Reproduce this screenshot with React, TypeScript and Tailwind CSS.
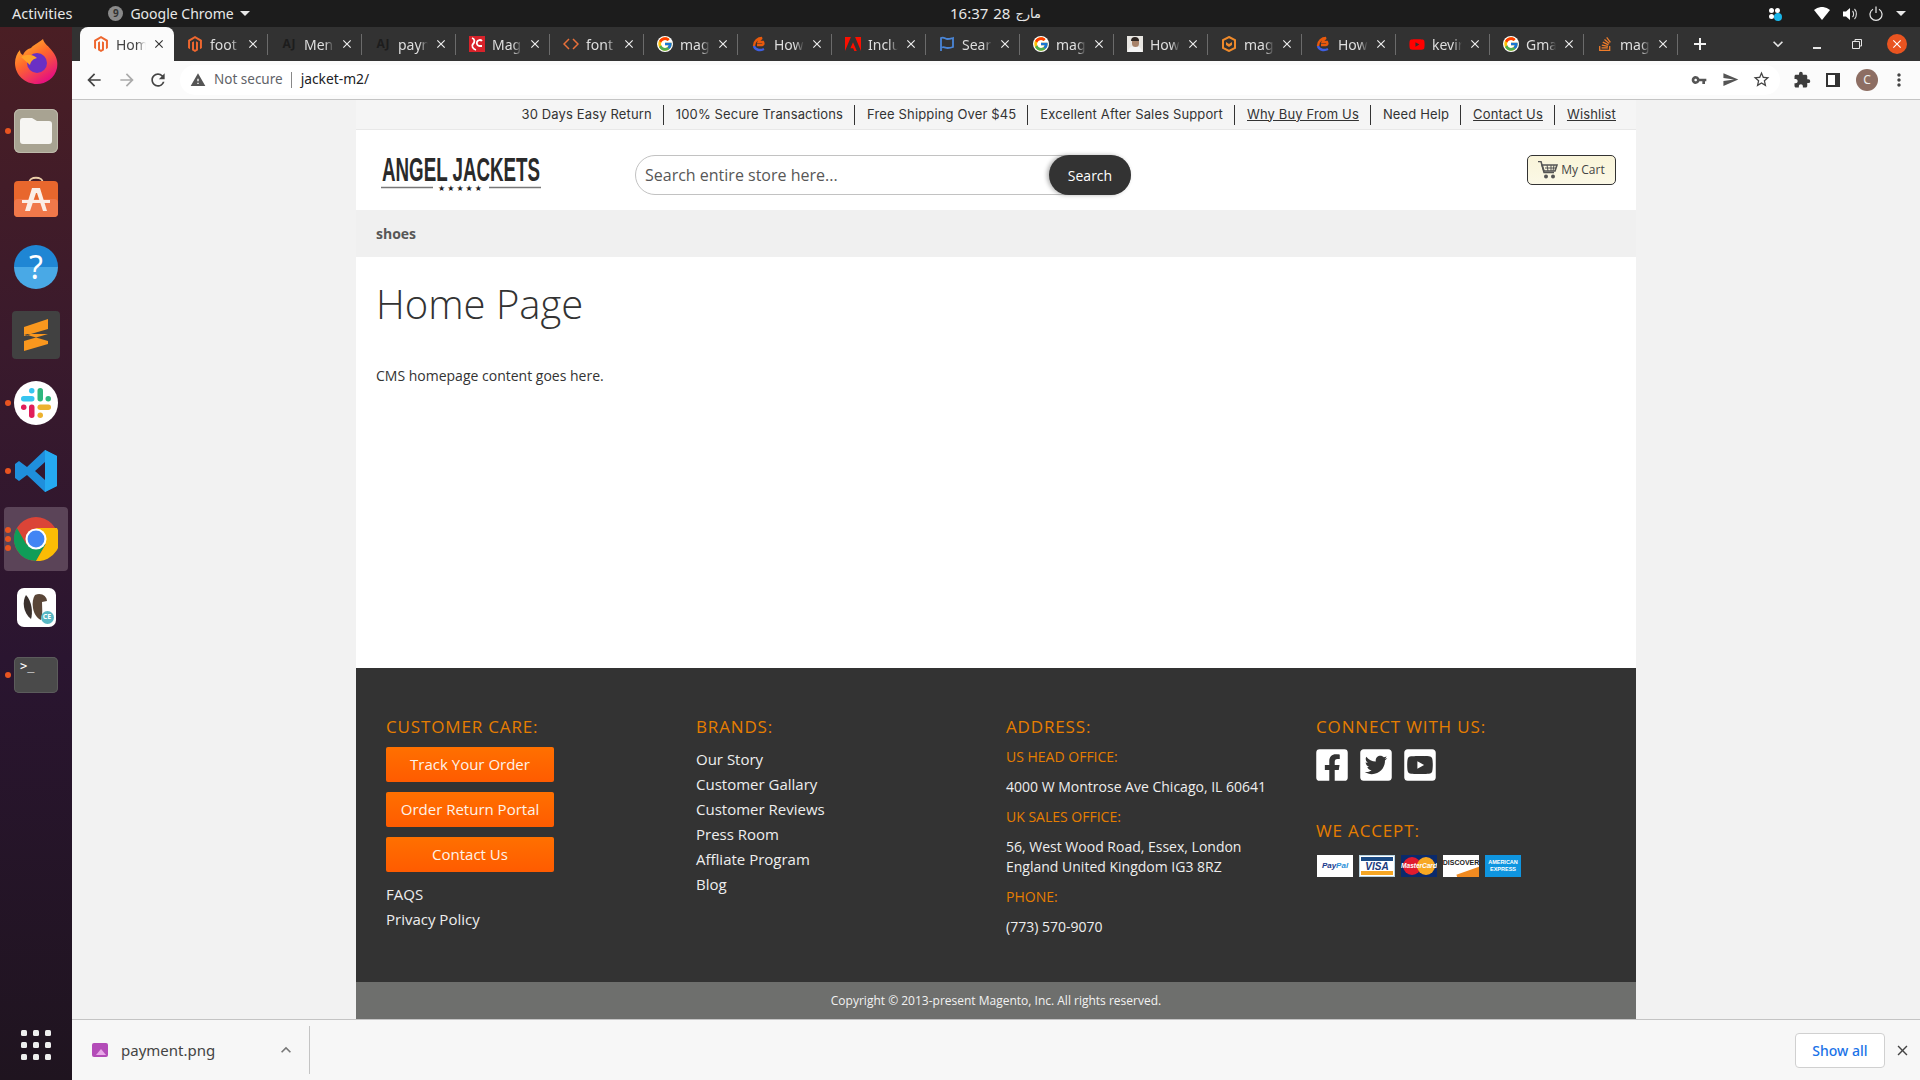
import type { ReactNode } from 'react'
import { FcGoogle } from 'react-icons/fc'
import { FaFacebookSquare, FaMagento, FaStackOverflow, FaTwitterSquare, FaYoutube, FaYoutubeSquare } from 'react-icons/fa'
import { SiAdobe } from 'react-icons/si'
import {
  MdArrowBack,
  MdArrowForward,
  MdClose,
  MdExpandLess,
  MdExpandMore,
  MdExtension,
  MdMoreVert,
  MdRefresh,
  MdSend,
  MdStarBorder,
  MdVpnKey,
  MdWarning,
} from 'react-icons/md'

const openSans = "font-['Open_Sans',sans-serif]"

function ChromeLogo({ size = 44 }: { size?: number }) {
  return (
    <svg width={size} height={size} viewBox="0 0 48 48">
      <circle cx="24" cy="24" r="24" fill="#db4437" />
      <path d="M3.2 12 A24 24 0 0 0 24 48 L34.400 30 L24 24 L13.600 30 Z" fill="#0f9d58" />
      <path d="M24 12 H46.800 A24 24 0 0 1 24 48 L34.400 30 Z" fill="#fbbc05" />
      <circle cx="24" cy="24" r="11.500" fill="#fff" />
      <circle cx="24" cy="24" r="9.200" fill="#4285f4" />
    </svg>
  )
}

function EdgeE() {
  return (
    <svg width="16" height="16" viewBox="0 0 16 16">
      <path d="M3 10 C3 5 7 2 11 2 C9 3 8 4 7.500 6 L12 6 C13 8 12 9 11 9 L6 9" fill="none" stroke="#e8590c" strokeWidth="2.400" />
      <path d="M3 10 C4 14 9 15 13 13" fill="none" stroke="#3f5fe0" strokeWidth="2.400" />
    </svg>
  )
}

const tabs: { label: string; icon: ReactNode }[] = [
  { label: 'Hom', icon: <FaMagento size={16} color="#ee672f" /> },
  { label: 'foot', icon: <FaMagento size={16} color="#ee672f" /> },
  { label: 'Men', icon: <span className="text-[12px] font-bold text-[#1d1d1d]">AJ</span> },
  { label: 'payn', icon: <span className="text-[12px] font-bold text-[#1d1d1d]">AJ</span> },
  { label: 'Mag', icon: (
    <svg width="16" height="16" viewBox="0 0 16 16">
      <rect width="16" height="16" fill="#d8222a" />
      <path d="M3 2c3 1 3 4 1 6s0 5 3 6M13 5a3 3 0 1 0-2 5h2" fill="none" stroke="#fff" strokeWidth="1.800" />
    </svg>
  ) },
  { label: 'font', icon: (
    <svg width="16" height="12" viewBox="0 0 16 12"><path d="M6 1L1 6l5 5M10 1l5 5-5 5" fill="none" stroke="#e8703a" strokeWidth="1.500" /></svg>
  ) },
  { label: 'mag', icon: <FcGoogle size={16} className="rounded-full bg-white" /> },
  { label: 'How', icon: <EdgeE /> },
  { label: 'Inclu', icon: <SiAdobe size={16} color="#fa0f00" /> },
  { label: 'Sear', icon: (
    <svg width="16" height="16" viewBox="0 0 16 16"><path d="M2 15V2c3-1.500 4 1 6.500 1S12 2.500 14 2v9c-2 .800-3.500 1-5.500 1S5 10.500 3 11.500" fill="none" stroke="#4a86d8" strokeWidth="1.800" /></svg>
  ) },
  { label: 'mag', icon: <FcGoogle size={16} className="rounded-full bg-white" /> },
  { label: 'How', icon: (
    <span className="relative flex h-4 w-4 items-end justify-center overflow-hidden bg-[#e8e6e2]">
      <span className="absolute bottom-0 h-[6px] w-[14px] rounded-t-full bg-[#f4f4f4]" />
      <span className="absolute top-[2px] h-[9px] w-[7px] rounded-full bg-[#a8836a]" />
      <span className="absolute top-[1px] h-[4px] w-[8px] rounded-t-full bg-[#2e2622]" />
    </span>
  ) },
  { label: 'mag', icon: (
    <svg width="16" height="16" viewBox="0 0 16 16"><path d="M8 1l6 3v8l-6 3-6-3V4z" fill="none" stroke="#ef8a2b" strokeWidth="2" /><path d="M5 6l3 2 3-2v3l-3 2-3-2z" fill="#ef8a2b" /></svg>
  ) },
  { label: 'How', icon: <EdgeE /> },
  { label: 'kevir', icon: <FaYoutube size={17} color="#ff0000" /> },
  { label: 'Gma', icon: <FcGoogle size={16} className="rounded-full bg-white" /> },
  { label: 'mag', icon: <FaStackOverflow size={16} color="#ef7d2b" /> },
]

function BrowserTab({ label, icon, active, divider }: { label: string; icon: ReactNode; active?: boolean; divider?: boolean }) {
  return (
    <div className={`flex h-full w-[94px] items-center pl-[13px] font-['Noto_Sans',sans-serif] ${active ? 'rounded-t-[8px] bg-[#fbfbfb] text-[#454545]' : 'text-[#dedede]'}`}>
      <span className="flex w-4 shrink-0 justify-center">{icon}</span>
      <span className="ml-[7px] w-[30px] shrink-0 overflow-hidden whitespace-nowrap text-[14px] [mask-image:linear-gradient(to_right,black_70%,transparent)]">
        {label}
      </span>
      <MdClose size={14} className={`ml-[6px] shrink-0 ${active ? 'text-[#333]' : 'text-[#eee]'}`} />
      {divider && <span className="ml-auto h-[21px] w-px bg-[#6b6b6b]" />}
    </div>
  )
}

function TopBar() {
  return (
    <div className="flex h-[27px] shrink-0 items-center bg-[#1c1c1c] text-[14.500px] text-[#e8e8e8] font-['Noto_Sans',sans-serif]">
      <div className="flex w-[950px] shrink-0 items-center pl-3">
        <span>Activities</span>
        <span className="ml-[36px] flex h-[15px] w-[15px] items-center justify-center rounded-full bg-[#8a8a8a] text-[10px] font-bold text-[#333]">9</span>
        <span className="ml-[7px] text-[14px]">Google Chrome</span>
        <span className="ml-[6px] h-0 w-0 border-x-[5px] border-t-[5px] border-x-transparent border-t-[#e8e8e8]" />
      </div>
      <div className="flex w-[91px] shrink-0 items-center justify-between whitespace-nowrap text-[15px]">
        <span>16:37</span>
        <span>28</span>
        <span className="font-['DejaVu_Sans',sans-serif] text-[13px]" dir="rtl">مارج</span>
      </div>
      <div className="ml-auto flex items-center pr-[14px]">
        <span className="relative h-3 w-3">
          <span className="absolute left-0 top-0 grid grid-cols-2 gap-px">
            <i className="h-[5px] w-[5px] rounded-sm bg-white" />
            <i className="h-[5px] w-[5px] rounded-sm bg-white" />
            <i className="h-[5px] w-[5px] rounded-sm bg-white" />
            <i className="h-[5px] w-[5px] rounded-sm bg-white" />
          </span>
          <span className="absolute left-[5px] top-[5px] h-2 w-2 rounded-full bg-[#19b5e8]" />
        </span>
        <svg className="ml-[33px]" width="16" height="13" viewBox="0 0 16 13"><path d="M0 3a12 12 0 0 1 16 0L8 13z" fill="#fff" /></svg>
        <svg className="ml-[13px]" width="15" height="14" viewBox="0 0 15 14">
          <path d="M0 4.500h3L7 1v12L3 9.500H0z" fill="#fff" />
          <path d="M9.500 4c1.500 1.500 1.500 4.500 0 6M11.500 2c2.500 2.500 2.500 7.500 0 10" fill="none" stroke="#ddd" strokeWidth="1.100" />
        </svg>
        <svg className="ml-[11px]" width="14" height="15" viewBox="0 0 14 15">
          <path d="M4 3.200a6 6 0 1 0 6 0M7 .500v6.500" fill="none" stroke="#e8e8e8" strokeWidth="1.200" />
        </svg>
        <span className="ml-[13px] h-0 w-0 border-x-[5px] border-t-[5px] border-x-transparent border-t-[#e8e8e8]" />
      </div>
    </div>
  )
}

function TabStrip() {
  return (
    <div className="flex h-[34px] shrink-0 items-center bg-[#323232] pl-2">
      {tabs.map((t, i) => (
        <BrowserTab key={i} label={t.label} icon={t.icon} active={i === 0} divider={i > 0} />
      ))}
      <svg className="ml-[14px]" width="16" height="16" viewBox="0 0 16 16"><path d="M8 2v12M2 8h12" stroke="#f2f2f2" strokeWidth="2" /></svg>
      <MdExpandMore size={20} className="ml-[60px] text-[#e6e6e6]" />
      <span className="ml-[25px] mt-[8px] h-[1.500px] w-2 bg-[#e6e6e6]" />
      <svg className="ml-[31px]" width="10" height="10" viewBox="0 0 10 10"><path d="M3 2.500V.500h6.500V7H7.500M.500 2.500h7V9.500h-7z" fill="none" stroke="#e6e6e6" /></svg>
      <span className="ml-[25px] flex h-5 w-5 items-center justify-center rounded-full bg-[#e95420]">
        <MdClose size={14} className="text-white" />
      </span>
    </div>
  )
}

function Toolbar() {
  return (
    <div className="flex h-[39px] shrink-0 items-center border-b border-[#c4c4c4] bg-[#fbfbfb] pb-px">
      <MdArrowBack size={20} className="ml-[12px] text-[#444]" />
      <MdArrowForward size={20} className="ml-[13px] text-[#aaa]" />
      <MdRefresh size={20} className="ml-[11px] text-[#444]" />
      <div className="ml-[12px] flex h-[30px] w-[1600px] items-center rounded-full bg-white pl-[10px] font-['Noto_Sans',sans-serif]">
        <MdWarning size={16} className="text-[#555]" />
        <span className="ml-[8px] text-[13.500px] text-[#5f6368]">Not secure</span>
        <span className="ml-[8px] h-[16px] w-px bg-[#888]" />
        <span className="ml-[9px] text-[13.800px] text-[#202124]">jacket-m2/</span>
        <MdVpnKey size={16} className="ml-auto text-[#555]" />
        <MdSend size={17} className="ml-[15px] text-[#555]" />
        <MdStarBorder size={19} className="ml-[13px] mr-[9px] text-[#444]" />
      </div>
      <MdExtension size={18} className="ml-[13px] text-[#3c3c3c]" />
      <svg className="ml-[15px]" width="14" height="14" viewBox="0 0 14 14">
        <path d="M1 1h12v12H1z" fill="#fff" stroke="#333" strokeWidth="2" />
        <path d="M9 1h4v12H9z" fill="#333" />
      </svg>
      <span className="ml-[16px] flex h-[22px] w-[22px] items-center justify-center rounded-full bg-[#8d6e63] text-[12px] text-[#eee]">C</span>
      <MdMoreVert size={20} className="ml-[11px] text-[#444]" />
    </div>
  )
}

function DockSlot({ children, dots = 0, highlight }: { children: ReactNode; dots?: number; highlight?: boolean }) {
  return (
    <div className="relative flex h-[68px] items-center justify-center">
      {highlight && <span className="absolute inset-x-1 inset-y-[2px] rounded-[4px] bg-[#5b4458]" />}
      {dots > 0 && (
        <span className="absolute left-[5px] top-1/2 flex -translate-y-1/2 flex-col gap-[3px]">
          {Array.from({ length: dots }).map((_, i) => (
            <i key={i} className="h-[6px] w-[6px] rounded-full bg-[#e95420]" />
          ))}
        </span>
      )}
      <span className="relative flex">{children}</span>
    </div>
  )
}

function Dock() {
  return (
    <div className="flex w-[72px] shrink-0 flex-col bg-[linear-gradient(to_bottom,#4a1e24_0%,#3a1a2c_30%,#2a1530_60%,#1f141f_100%)] pt-[2px]">
      <DockSlot>
        <svg className="-mt-[4px]" width="45" height="47" viewBox="0 0 45 47">
          <defs>
            <linearGradient id="ff" x1="0" y1="0" x2="0.600" y2="1">
              <stop offset="0" stopColor="#ffcb2e" />
              <stop offset="0.500" stopColor="#ff6a2b" />
              <stop offset="1" stopColor="#e6127d" />
            </linearGradient>
          </defs>
          <path d="M29 1c1 5 6 7 10 13 4 5 5 11 4 16-2 10-11 16-20 16C11 46 1 37 1 25c0-5 2-10 5-13 0 3 1 4 3 5 1-3 4-6 8-7 2-3 6-4 12-9z" fill="url(#ff)" />
          <circle cx="23" cy="25" r="10" fill="#6a2fc4" />
          <path d="M7 19c6-3 11-3 16 1-4 1-6 3-7 7-3-3-6-5-9-8z" fill="#ffa22a" />
        </svg>
      </DockSlot>
      <DockSlot dots={1}>
        <span className="flex h-[44px] w-[44px] items-center justify-center rounded-[6px] bg-[#a8a392] shadow-[inset_0_0_0_1px_#bdb9aa]">
          <svg width="32" height="26" viewBox="0 0 32 26">
            <path d="M0 3a3 3 0 0 1 3-3h9l5 3h12a3 3 0 0 1 3 3v17a3 3 0 0 1-3 3H3a3 3 0 0 1-3-3z" fill="#f6f5f2" />
          </svg>
        </span>
      </DockSlot>
      <DockSlot>
        <svg className="-mt-[4px]" width="44" height="44" viewBox="0 0 44 44">
          <path d="M15 8C15 1 29 1 29 8" fill="none" stroke="#eccfa9" strokeWidth="1.800" />
          <rect y="6" width="44" height="36" rx="4" fill="#e8672d" />
          <rect y="24" width="44" height="18" rx="4" fill="#f0784a" />
          <path d="M18 13h8l7 23h-4l-6-18h-1l-6 18h-5z" fill="#fbeee6" />
          <rect x="8" y="25" width="28" height="3" fill="#fbeee6" />
        </svg>
      </DockSlot>
      <DockSlot>
        <span className="flex h-[44px] w-[44px] items-center justify-center rounded-full bg-[linear-gradient(to_bottom,#1f86d4_50%,#49a9e6_50%)] font-['Noto_Sans',sans-serif] text-[32px] leading-none text-white">?</span>
      </DockSlot>
      <DockSlot>
        <span className="flex h-[48px] w-[48px] items-center justify-center rounded-[4px] bg-[#414141]">
          <svg width="26" height="32" viewBox="0 0 26 32">
            <path d="M25 0v10L1 17V8zM1 15l24 7v3L1 32V22l24-7z" fill="#f9971e" />
          </svg>
        </span>
      </DockSlot>
      <DockSlot dots={1}>
        <span className="flex h-[44px] w-[44px] items-center justify-center rounded-full bg-white">
          <svg width="30" height="30" viewBox="0 0 30 30">
            <rect x="0" y="8" width="13.500" height="5.500" rx="2.700" fill="#36c5f0" />
            <rect x="8" y="0" width="5.500" height="5.500" rx="2.700" fill="#36c5f0" />
            <rect x="16.500" y="0" width="5.500" height="13.500" rx="2.700" fill="#2eb67d" />
            <rect x="24.500" y="8" width="5.500" height="5.500" rx="2.700" fill="#2eb67d" />
            <rect x="16.500" y="16.500" width="13.500" height="5.500" rx="2.700" fill="#ecb22e" />
            <rect x="16.500" y="24.500" width="5.500" height="5.500" rx="2.700" fill="#ecb22e" />
            <rect x="8" y="16.500" width="5.500" height="13.500" rx="2.700" fill="#e01e5a" />
            <rect x="0" y="16.500" width="5.500" height="5.500" rx="2.700" fill="#e01e5a" />
          </svg>
        </span>
      </DockSlot>
      <DockSlot dots={1}>
        <svg width="44" height="44" viewBox="0 0 44 44">
          <path d="M31 1l12 6v30l-12 6-18-17-8 6-4-3v-14l4-3 8 6zM31 13l-10 9 10 9z" fill="#1f8fdc" />
          <path d="M31 1l12 6v30l-12 6z" fill="#25a9f0" />
        </svg>
      </DockSlot>
      <DockSlot dots={3} highlight>
        <ChromeLogo />
      </DockSlot>
      <DockSlot>
        <span className="relative flex h-[39px] w-[39px] items-center justify-center rounded-[7px] bg-white">
          <svg width="28" height="32" viewBox="0 0 28 32">
            <path d="M4 4c-4 6-3 18 5 24 2-6 1-18-5-24z" fill="#3a302c" />
            <path d="M13 4c6-3 12 1 12 6l-5 1c0 6 1 12-1 18-4-2-7-6-8-12-1-5 0-10 2-13z" fill="#5a4638" />
          </svg>
          <span className="absolute bottom-[3px] right-[2px] flex h-[13px] w-[13px] items-center justify-center rounded-full bg-[#58b8c4] text-[7px] font-bold text-white">CE</span>
        </span>
      </DockSlot>
      <DockSlot dots={1}>
        <span className="flex h-[36px] w-[44px] items-start rounded-[5px] bg-[#4a4a4a] pl-[6px] pt-[3px] font-['DejaVu_Sans_Mono',monospace] text-[12px] leading-none text-white shadow-[inset_0_0_0_1px_#5c5c5c]">
          {'>_'}
        </span>
      </DockSlot>
      <div className="mt-auto flex h-[70px] items-center justify-center">
        <div className="grid grid-cols-3 gap-[6px]">
          {Array.from({ length: 9 }).map((_, i) => (
            <i key={i} className="h-[6px] w-[6px] rounded-[1.500px] bg-[#eee]" />
          ))}
        </div>
      </div>
    </div>
  )
}

const topLinks: { text: string; underline?: boolean }[] = [
  { text: '30 Days Easy Return' },
  { text: '100% Secure Transactions' },
  { text: 'Free Shipping Over $45' },
  { text: 'Excellent After Sales Support' },
  { text: 'Why Buy From Us', underline: true },
  { text: 'Need Help' },
  { text: 'Contact Us', underline: true },
  { text: 'Wishlist', underline: true },
]

function SiteTopStrip() {
  return (
    <div className="flex h-[30px] shrink-0 items-center justify-end border-b border-[#e8e8e8] bg-[#f5f5f5] pr-5 font-['Inter',sans-serif] text-[13px] tracking-[0.14px] text-[#333]">
      {topLinks.map((l, i) => (
        <span key={l.text} className="flex items-center">
          {i > 0 && <span className="ml-[11px] mr-[12px] h-5 w-px bg-[#333]" />}
          <span className={`whitespace-nowrap ${l.underline ? 'underline' : ''}`}>{l.text}</span>
        </span>
      ))}
    </div>
  )
}

function Logo() {
  return (
    <svg width="160" height="38" viewBox="0 0 160 38">
      <text x="1" y="26.500" textLength="158" lengthAdjust="spacingAndGlyphs" fontFamily="'Liberation Sans Narrow','Liberation Sans',sans-serif" fontWeight="700" fontSize="33" fill="#2a2a2a">
        ANGEL JACKETS
      </text>
      <path d="M0 33.500h52M108 33.500h52" stroke="#777" strokeWidth="1.500" />
      <text x="80" y="36.500" textAnchor="middle" fontFamily="'DejaVu Sans',sans-serif" fontSize="8" letterSpacing="2" fill="#222">★★★★★</text>
    </svg>
  )
}

function SiteHeader() {
  return (
    <div className={`flex h-[80px] shrink-0 bg-white ${openSans}`}>
      <div className="ml-[25px] mt-[24px]"><Logo /></div>
      <div className="ml-[94px] mt-[25px] flex h-[40px] w-[496px] rounded-full border border-[#c2c2c2]">
        <span className="flex-1 pl-[9px] text-[16px] leading-[38px] text-[#575757]">Search entire store here...</span>
        <span className="-my-px -mr-px flex w-[82px] items-center justify-center rounded-full bg-[#333] text-[14px] text-white shadow-[-2px_0_4px_rgba(0,0,0,0.3)]">Search</span>
      </div>
      <div className="ml-auto mr-5 mt-[25px] flex h-[30px] w-[89px] items-center justify-center gap-[3px] rounded-[5px] border border-[#333] bg-[linear-gradient(to_bottom,#f9f4d9,#fbf8e6)] text-[12px] text-[#444]">
        <svg width="20" height="18" viewBox="0 0 20 18">
          <path d="M0 .500h3l3 11h10" fill="none" stroke="#555" strokeWidth="1.500" />
          <path d="M4 4h15l-2 6H6z" fill="none" stroke="#555" strokeWidth="1.600" />
          <path d="M7 7h11M9 4l1 6M13 4v6M16 4l-1 6" stroke="#555" />
          <circle cx="8" cy="15.500" r="2" fill="#555" />
          <circle cx="15" cy="15.500" r="2" fill="#555" />
        </svg>
        My Cart
      </div>
    </div>
  )
}

function FooterHeading({ children, className = '' }: { children: ReactNode; className?: string }) {
  return <h3 className={`text-[17px] leading-[24px] tracking-[0.85px] text-[#e67e00] ${className}`}>{children}</h3>
}

function OrangeButton({ children }: { children: ReactNode }) {
  return (
    <div className="flex h-[35px] w-[168px] items-center justify-center rounded-[2px] bg-[linear-gradient(to_bottom,#ff7000,#ff5b00)] text-[15px] text-[#fdf3ea]">
      {children}
    </div>
  )
}

function PayCard({ className, children }: { className: string; children: ReactNode }) {
  return <div className={`relative flex h-[22px] w-[36px] items-center justify-center overflow-hidden font-['Liberation_Sans',sans-serif] ${className}`}>{children}</div>
}

function PaymentCards() {
  return (
    <div className="mt-[12px] flex gap-[6px] pl-px">
      <PayCard className="bg-white text-[8px] font-bold italic text-[#1a3a8c]">Pay<span className="text-[#2a8fd8]">Pal</span></PayCard>
      <PayCard className="border border-[#b9d4e0] bg-white text-[10px] font-bold italic text-[#1a3a7c]">
        <span className="absolute inset-x-[1px] top-[1px] h-[4px] bg-[#1a4a84]" />
        <span className="absolute inset-x-[1px] bottom-[1px] h-[4px] bg-[#f5a623]" />
        VISA
      </PayCard>
      <PayCard className="bg-[#0a2a6c]">
        <span className="absolute left-[2px] h-[18px] w-[18px] rounded-full bg-[#e01b2e]" />
        <span className="absolute right-[2px] h-[18px] w-[18px] rounded-full bg-[#f7a823]" />
        <span className="relative text-[6.500px] font-bold italic text-white">MasterCard</span>
      </PayCard>
      <PayCard className="bg-white text-[7px] font-bold text-[#222]">
        <span className="absolute -bottom-[7px] -right-[5px] h-[14px] w-[26px] -rotate-[20deg] bg-[#f08a20]" />
        <span className="relative -mt-[6px]">DISCOVER</span>
      </PayCard>
      <PayCard className="bg-[#0f95e0] text-[5.500px] font-bold leading-[7px] text-white">
        <span className="text-center">AMERICAN<br />EXPRESS</span>
      </PayCard>
    </div>
  )
}

function SiteFooter() {
  const brands = ['Our Story', 'Customer Gallary', 'Customer Reviews', 'Press Room', 'Affliate Program', 'Blog']
  return (
    <div className={`shrink-0 ${openSans}`}>
      <div className="grid h-[314px] grid-cols-[310px_310px_310px_310px] bg-[#333] pl-[30px] pt-[47px] text-[14px] text-[#eee]">
        <div>
          <FooterHeading>CUSTOMER CARE:</FooterHeading>
          <div className="mt-[8px] flex flex-col gap-[10px]">
            <OrangeButton>Track Your Order</OrangeButton>
            <OrangeButton>Order Return Portal</OrangeButton>
            <OrangeButton>Contact Us</OrangeButton>
          </div>
          <div className="mt-[10px] flex flex-col text-[15px] leading-[25px]">
            <span>FAQS</span>
            <span>Privacy Policy</span>
          </div>
        </div>
        <div>
          <FooterHeading>BRANDS:</FooterHeading>
          <div className="mt-[8px] flex flex-col text-[15px] leading-[25px]">
            {brands.map(b => <span key={b}>{b}</span>)}
          </div>
        </div>
        <div className="leading-[20px]">
          <FooterHeading>ADDRESS:</FooterHeading>
          <p className="mt-[8px] text-[#e67e00]">US HEAD OFFICE:</p>
          <p className="mt-[10px]">4000 W Montrose Ave Chicago, IL 60641</p>
          <p className="mt-[10px] text-[#e67e00]">UK SALES OFFICE:</p>
          <p className="mt-[10px]">56, West Wood Road, Essex, London<br />England United Kingdom IG3 8RZ</p>
          <p className="mt-[10px] text-[#e67e00]">PHONE:</p>
          <p className="mt-[10px]">(773) 570-9070</p>
        </div>
        <div>
          <FooterHeading>CONNECT WITH US:</FooterHeading>
          <div className="-ml-[2px] mt-[8px] flex gap-[8px] text-white">
            <FaFacebookSquare size={36} />
            <FaTwitterSquare size={36} />
            <FaYoutubeSquare size={36} />
          </div>
          <FooterHeading className="mt-[36px]">WE ACCEPT:</FooterHeading>
          <PaymentCards />
        </div>
      </div>
      <div className="flex h-[37px] items-center justify-center bg-[#6e6f6d] text-[12px] text-[#f2f2f2]">
        Copyright © 2013-present Magento, Inc. All rights reserved.
      </div>
    </div>
  )
}

function DownloadBar() {
  return (
    <div className="flex h-[61px] shrink-0 items-center border-t border-[#c4c4c4] bg-[#f7f7f7] font-['Noto_Sans',sans-serif]">
      <span className="ml-[20px] flex h-[14px] w-4 items-end justify-end rounded-[2px] bg-[#b34cb8] p-[2px]">
        <i className="h-[6px] w-[10px] bg-[#e8a8e8] [clip-path:polygon(0_100%,50%_0,100%_100%)]" />
      </span>
      <span className="ml-[13px] text-[15px] text-[#444]">payment.png</span>
      <MdExpandLess size={20} className="ml-[61px] text-[#777]" />
      <span className="ml-[13px] h-[48px] w-px bg-[#c4c4c4]" />
      <span className="ml-auto flex h-[35px] w-[90px] items-center justify-center rounded-[4px] border border-[#d0d0d0] bg-white text-[14px] font-medium text-[#1a73e8]">Show all</span>
      <MdClose size={17} className="ml-[9px] mr-[9px] text-[#444]" />
    </div>
  )
}

export default function App() {
  return (
    <div className="flex h-[1080px] w-[1920px] flex-col overflow-hidden bg-[#f2f2f2]">
      <TopBar />
      <div className="flex min-h-0 flex-1">
        <Dock />
        <div className="flex min-w-0 flex-1 flex-col">
          <TabStrip />
          <Toolbar />
          <div className="flex min-h-0 flex-1 flex-col pl-[284px] pr-[284px]">
            <SiteTopStrip />
            <SiteHeader />
            <div className={`flex h-[47px] shrink-0 items-center bg-[#f0f0f0] pl-5 text-[14px] font-bold text-[#575757] ${openSans}`}>shoes</div>
            <div className={`h-[411px] shrink-0 bg-white pl-5 ${openSans}`}>
              <h1 className="pt-[19px] text-[40px] font-light leading-[56px] text-[#333]">Home Page</h1>
              <p className="mt-[34px] text-[14px] leading-[20px] text-[#333]">CMS homepage content goes here.</p>
            </div>
            <SiteFooter />
          </div>
          <DownloadBar />
        </div>
      </div>
    </div>
  )
}
